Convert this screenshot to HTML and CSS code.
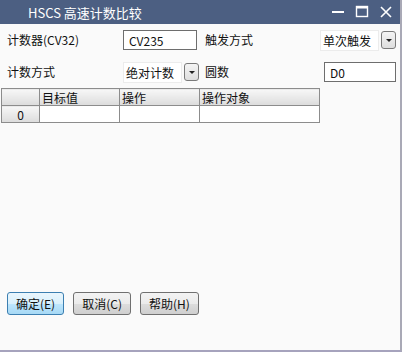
FILE: index.html
```html
<!DOCTYPE html>
<html lang="zh">
<head>
    <meta charset="UTF-8">
    <title>HSCS 高速计数比较</title>
    <link rel="stylesheet" href="styles.css">
</head>
<body>
    <div class="window">
        <div class="titlebar">
            <span class="title">HSCS 高速计数比较</span>
            <div class="controls">
                <svg width="14" height="14" viewBox="0 0 14 14"><rect x="1" y="6" width="12" height="2" fill="#fff"/></svg>
                <svg width="14" height="14" viewBox="0 0 14 14"><rect x="1.5" y="1.5" width="11" height="10" fill="none" stroke="#fff" stroke-width="1.4"/><rect x="1" y="1" width="12" height="2.5" fill="#fff"/></svg>
                <svg width="14" height="14" viewBox="0 0 14 14"><path d="M2 2 L12 12 M12 2 L2 12" stroke="#fff" stroke-width="1.6"/></svg>
            </div>
        </div>
        <div class="content">
            <div class="form">
                <label>计数器(CV32)</label>
                <div class="cell"><input class="text" type="text" value="CV235" style="width: 74px;"></div>
                <label>触发方式</label>
                <div class="cell">
                    <div class="combo">
                        <span class="combo-text">单次触发</span>
                        <span class="combo-btn"><i></i></span>
                    </div>
                </div>

                <label>计数方式</label>
                <div class="cell">
                    <div class="combo">
                        <span class="combo-text">绝对计数</span>
                        <span class="combo-btn"><i></i></span>
                    </div>
                </div>
                <label>圆数</label>
                <div class="cell"><input class="text" type="text" value="D0" style="width: 72px; margin-left: 4px;"></div>
            </div>

            <table class="grid">
                <colgroup>
                    <col style="width: 38px;">
                    <col style="width: 80px;">
                    <col style="width: 80px;">
                    <col style="width: 120px;">
                </colgroup>
                <tr>
                    <th></th>
                    <th>目标值</th>
                    <th>操作</th>
                    <th>操作对象</th>
                </tr>
                <tr>
                    <th class="rowhead">0</th>
                    <td></td>
                    <td></td>
                    <td></td>
                </tr>
            </table>

            <div class="buttons">
                <button class="btn primary">确定(E)</button>
                <button class="btn">取消(C)</button>
                <button class="btn">帮助(H)</button>
            </div>
        </div>
    </div>
</body>
</html>
```

FILE: styles.css
```css
body {
    margin: 0;
    background-color: #fafafa;
    font-family: "Noto Sans CJK SC", "DejaVu Sans", sans-serif;
    font-size: 12px;
    color: #111;
}
.window {
    width: 400px;
    height: 350px;
    border-right: 2px solid #a9a9b6;
    border-bottom: 2px solid #a6a3bd;
    background: #fafafa;
    display: flex;
    flex-direction: column;
}
.titlebar {
    height: 24px;
    background-color: #4c5f82;
    color: white;
    display: flex;
    align-items: center;
    justify-content: space-between;
}
.title {
    padding-left: 28px;
    font-size: 13px;
}
.controls {
    display: flex;
    gap: 10px;
    padding-right: 7px;
}
.content {
    flex: 1;
    display: flex;
    flex-direction: column;
}
.form {
    display: grid;
    grid-template-columns: 116px 82px 115px 80px;
    grid-auto-rows: 32px;
    padding: 0 0 0 7px;
    align-items: center;
}
.form label {
    line-height: 20px;
}
.cell {
    display: flex;
    align-items: center;
}
.text {
    box-sizing: border-box;
    height: 20px;
    border: 1px solid #6e6e6e;
    background: white;
    font-family: inherit;
    font-size: 12px;
    padding: 0 5px;
    margin: 0;
    outline: none;
    color: #111;
}
.combo {
    display: flex;
    align-items: center;
    height: 21px;
}
.combo-text {
    width: 59px;
    height: 21px;
    line-height: 20px;
    padding-left: 2px;
    background: white;
    border: 1px solid #ececec;
    box-sizing: border-box;
}
.combo-btn {
    margin-left: 2px;
    width: 13px;
    height: 16px;
    border: 1px solid #7a7a7a;
    border-radius: 3px;
    background: linear-gradient(#f4f4f4, #dedede);
    display: flex;
    align-items: center;
    justify-content: center;
}
.combo-btn i {
    width: 0;
    height: 0;
    border-left: 3px solid transparent;
    border-right: 3px solid transparent;
    border-top: 3px solid #222;
}
.grid {
    margin: 0 0 0 1px;
    width: 319px;
    table-layout: fixed;
    border-collapse: collapse;
    border: 1px solid #8c8c8c;
    font-size: 12px;
}
.grid th, .grid td {
    border: 1px solid #8c8c8c;
    height: 16px;
    padding: 0 2px;
    font-weight: normal;
    text-align: left;
    line-height: 15px;
}
.grid th {
    background: linear-gradient(#f7f7f7, #dcdcdc);
}
.grid td {
    background: white;
}
.grid .rowhead {
    text-align: center;
}
.buttons {
    margin-top: auto;
    margin-bottom: 35px;
    padding-left: 7px;
    display: flex;
    gap: 9px;
}
.btn {
    height: 23px;
    padding: 0 8px;
    border: 1px solid #707070;
    border-radius: 3px;
    background: linear-gradient(#f3f3f3 0%, #ebebeb 50%, #dddddd 51%, #cfcfcf 100%);
    font-family: inherit;
    font-size: 12px;
    color: #111;
}
.btn.primary {
    border-color: #3c7fb1;
    background: linear-gradient(#eaf6fd 0%, #d9f0fc 50%, #bee6fd 51%, #a7d9f5 100%);
}
```
